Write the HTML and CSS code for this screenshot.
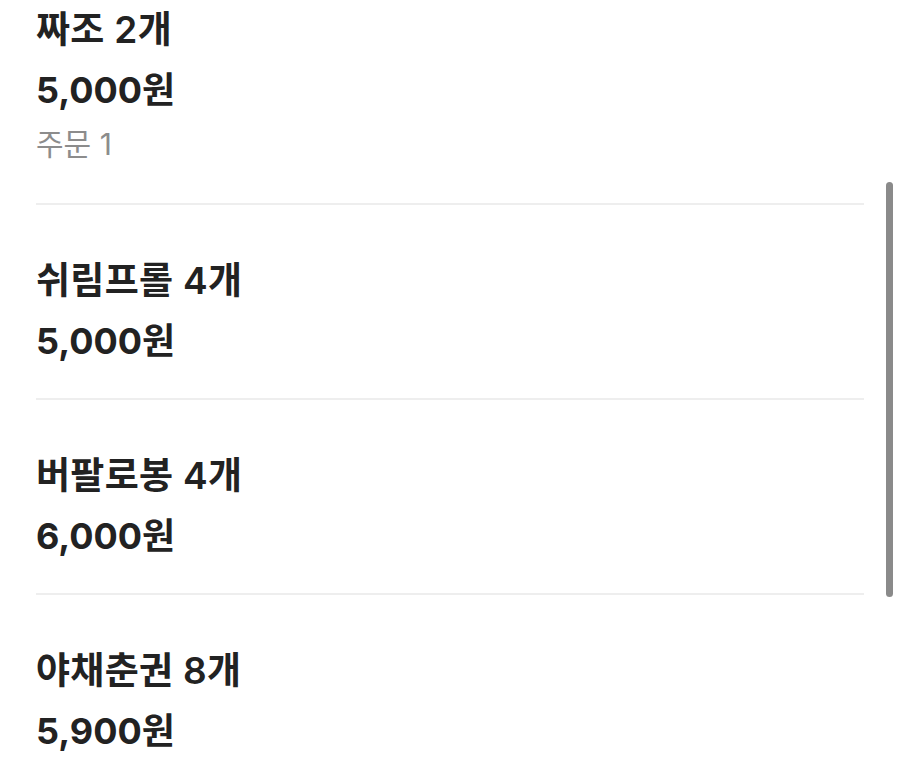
FILE: index.html
```html
<!DOCTYPE html>
<html lang="ko">
<head>
    <meta charset="UTF-8">
    <meta name="viewport" content="width=device-width, initial-scale=1.0">
    <title>주문 목록</title>
    <link rel="stylesheet" href="styles.css">
</head>
<body>

<div class="order-list">
    <div class="order-item">
        <div class="item-name">짜조 2개</div>
        <div class="item-price">5,000원</div>
        <div class="item-meta">주문 1</div>
    </div>

    <div class="order-item">
        <div class="item-name">쉬림프롤 4개</div>
        <div class="item-price">5,000원</div>
    </div>

    <div class="order-item">
        <div class="item-name">버팔로봉 4개</div>
        <div class="item-price">6,000원</div>
    </div>

    <div class="order-item">
        <div class="item-name">야채춘권 8개</div>
        <div class="item-price">5,900원</div>
    </div>
</div>

<!-- overlay scrollbar -->
<div class="scroll-thumb"></div>

</body>
</html>
```

FILE: styles.css
```css
/* General styling */
body {
    font-family: Inter, "Noto Sans CJK KR", sans-serif;
    background-color: #fff;
    color: #222;
    margin: 0;
    overflow: hidden;
}

/* List is scrolled a little past the first item's top */
.order-list {
    margin-top: -46px;
    padding: 0 36px;
}

.order-item {
    padding: 46px 0 27px;
    border-bottom: 2px solid #eeeeee;
}

.item-name {
    font-size: 37px;
    font-weight: 600;
    line-height: 60px;
    letter-spacing: 0.3px;
}

.item-price {
    font-size: 36px;
    font-weight: 700;
    line-height: 60px;
}

.item-meta {
    font-size: 30px;
    color: #8c8c8c;
    line-height: 44px;
    margin: 2px 0 10px;
}

.scroll-thumb {
    position: fixed;
    top: 182px;
    right: 7px;
    width: 7px;
    height: 415px;
    border-radius: 4px;
    background-color: #8a8a8a;
}
```
